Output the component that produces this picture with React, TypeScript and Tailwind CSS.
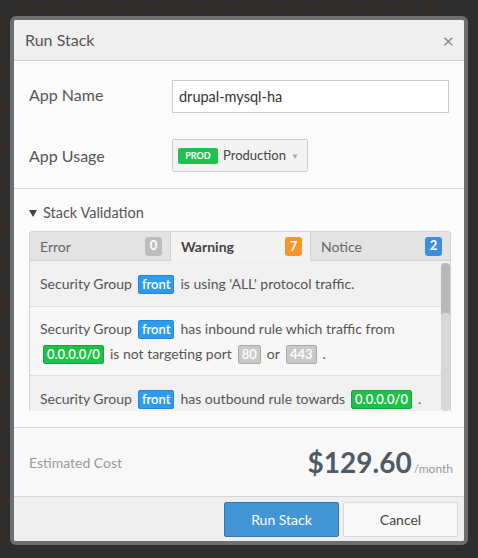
import React from "react";

const tabs = [
  { label: "Error", count: "0", badge: "bg-[#bdbdbd]", active: false },
  { label: "Warning", count: "7", badge: "bg-[#f7952b]", active: true },
  { label: "Notice", count: "2", badge: "bg-[#3c8fd8]", active: false },
];

function Tag({ kind, first, children }: { kind: "blue" | "green" | "grey"; first?: boolean; children: React.ReactNode }) {
  const cls =
    kind === "blue"
      ? "bg-[#2d9bf0] border-[#2588d6]"
      : kind === "green"
      ? "bg-[#1ec147] border-[#17a83c]"
      : "bg-[#c9c9c9] border-[#a9a9a9]";
  return (
    <span
      className={`${first ? "ml-[3px]" : "ml-[6px]"} mr-[6px] inline-block rounded-[2px] border px-[3px] text-[13px] font-semibold leading-[17px] text-white ${cls}`}
    >
      {children}
    </span>
  );
}

export default function App() {
  return (
    <div
      className="relative h-[558px] w-[478px] overflow-hidden bg-[#2e2e2e] pl-[10px] pt-[16px]"
      style={{ fontFamily: "Lato, 'Open Sans', sans-serif" }}
    >
      {/* zone box behind the dialog */}
      <div className="absolute left-[2px] top-[4px] h-[600px] w-[430px] rounded-tr-[6px] border-2 border-dashed border-[#3d2a18]">
        <span className="ml-[2px] text-[14px] leading-[16px] text-[#3d2a18]">us-east-1b</span>
      </div>

      <div className="relative w-[458px] rounded-[6px] border-4 border-[#6e6e6e]">
        <div className="flex flex-col overflow-hidden rounded-[2px] bg-[#fbfbfb]">
          {/* header */}
          <div className="flex h-[41px] items-center justify-between border-b border-[#cfcfcf] bg-[#efefef] pl-[11px] pr-[10px]">
            <span className="text-[16px] text-[#555]">Run Stack</span>
            <span className="text-[20px] leading-none text-[#8a8a8a]">×</span>
          </div>

          {/* form */}
          <div className="flex flex-col gap-[26px] pb-[16px] pl-[15px] pr-[15px] pt-[19px]">
            <div className="flex items-center">
              <span className="w-[143px] pb-[4px] text-[16px] text-[#555]">App Name</span>
              <div className="flex h-[33px] flex-1 items-center border border-[#cccccc] bg-white px-[6px] text-[14.5px] text-[#333]">
                drupal-mysql-ha
              </div>
            </div>
            <div className="flex items-center">
              <span className="w-[143px] text-[16px] text-[#555]">App Usage</span>
              <div className="flex h-[33px] w-[136px] items-center rounded-[2px] border border-[#cccccc] bg-[#f3f3f3] pl-[5px] pr-[8px]">
                <span className="flex h-[16px] w-[40px] items-center justify-center rounded-[2px] bg-[#1fc14f] text-[9px] font-bold text-white">
                  PROD
                </span>
                <span className="ml-[5px] text-[13px] text-[#444]">Production</span>
                <span className="ml-auto text-[8px] text-[#aaa]">▼</span>
              </div>
            </div>
          </div>

          {/* validation */}
          <div className="border-t border-[#d6d6d6] pb-[16px] pl-[15px] pr-[13px] pt-[14px]">
            <div className="flex h-[20px] items-center gap-[6px] text-[#555]">
              <svg width="8" height="7" viewBox="0 0 8 7" className="mt-[1px]">
                <path d="M0 0H8L4 7Z" fill="#444" />
              </svg>
              <span className="text-[14.5px]">Stack Validation</span>
            </div>
            <div className="mt-[8px] overflow-hidden rounded-t-[4px] border border-b-0 border-[#d3d3d3]">
              <div className="grid grid-cols-3">
                {tabs.map((t, i) => (
                  <div
                    key={t.label}
                    className={`flex h-[29px] items-center justify-between pl-[10px] pr-[8px] ${
                      t.active ? "bg-[#f3f3f3]" : "border-b border-[#d3d3d3] bg-[#e3e3e3]"
                    } ${i > 0 ? "border-l border-l-[#d3d3d3]" : ""}`}
                  >
                    <span
                      className={`text-[14px] ${t.active ? "font-bold text-[#444]" : "text-[#666]"}`}
                    >
                      {t.label}
                    </span>
                    <span
                      className={`flex h-[19px] w-[17px] items-center justify-center rounded-[3px] text-[13px] font-bold text-white ${t.badge}`}
                    >
                      {t.count}
                    </span>
                  </div>
                ))}
              </div>
              <div className="flex h-[150px] bg-[#f0f0f0]">
                <div className="flex-1 overflow-hidden text-[14px] leading-[25px] text-[#555]">
                  <div className="border-b border-[#dedede] bg-[#f0f0f0] py-[10px] pl-[10px]">
                    Security Group<Tag kind="blue">front</Tag>is using 'ALL' protocol traffic.
                  </div>
                  <div className="border-b border-[#dedede] bg-[#f7f7f7] py-[9px] pl-[10px]">
                    Security Group<Tag kind="blue">front</Tag>has inbound rule which traffic from
                    <br />
                    <Tag kind="green" first>0.0.0.0/0</Tag>is not targeting port<Tag kind="grey">80</Tag>or
                    <Tag kind="grey">443</Tag>.
                  </div>
                  <div className="bg-[#f0f0f0] py-[10px] pl-[10px]">
                    Security Group<Tag kind="blue">front</Tag>has outbound rule towards
                    <Tag kind="green">0.0.0.0/0</Tag>.
                  </div>
                </div>
                <div className="flex w-[9px] flex-col bg-[#f0f0f0] pt-[2px]">
                  <div className="h-[54px] rounded-[4px] bg-[#b8b8b8]" />
                  <div className="-mt-[4px] flex-1 rounded-[4px] bg-[#d7d7d7]" />
                </div>
              </div>
            </div>
          </div>

          {/* cost */}
          <div className="flex h-[69px] items-center justify-between border-t border-[#d6d6d6] bg-[#f8f8f8] pl-[15px] pr-[11px]">
            <span className="text-[14px] text-[#999]">Estimated Cost</span>
            <div className="flex items-baseline">
              <span className="text-[28px] font-bold text-[#4d5a67]">$129.60</span>
              <span className="ml-[2px] text-[12px] text-[#999]">/month</span>
            </div>
          </div>

          {/* footer */}
          <div className="flex h-[45px] items-center justify-end gap-[4px] border-t border-[#d6d6d6] bg-[#efefef] pr-[6px]">
            <button className="h-[35px] w-[115px] rounded-[2px] border border-[#2f78b8] bg-[#4396d6] text-[14px] text-white">
              Run Stack
            </button>
            <button className="h-[35px] w-[115px] rounded-[2px] border border-[#d9d9d9] bg-[#f8f8f8] text-[14px] text-[#444]">
              Cancel
            </button>
          </div>
        </div>
      </div>
    </div>
  );
}
